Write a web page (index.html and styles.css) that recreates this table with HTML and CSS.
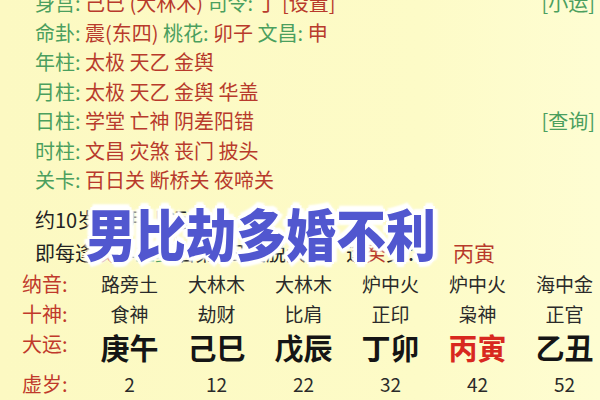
FILE: index.html
```html
<!DOCTYPE html>
<html lang="zh-CN">
<head>
<meta charset="utf-8">
<link rel="stylesheet" href="styles.css">
</head>
<body>
<div class="page">
  <div class="info">
    <div class="row"><span class="txt"><span class="g">身宫:</span> <span class="r">己巳 (大林木)</span> <span class="g">司令:</span> <span class="r">丁 [设置]</span></span><span class="link">[小运]</span></div>
    <div class="row"><span class="txt"><span class="g">命卦:</span> <span class="r">震(东四)</span> <span class="g">桃花:</span> <span class="r">卯子</span> <span class="g">文昌:</span> <span class="r">申</span></span></div>
    <div class="row"><span class="txt"><span class="g">年柱:</span> <span class="r">太极 天乙 金舆</span></span></div>
    <div class="row"><span class="txt"><span class="g">月柱:</span> <span class="r">太极 天乙 金舆 华盖</span></span></div>
    <div class="row"><span class="txt"><span class="g">日柱:</span> <span class="r">学堂 亡神 阴差阳错</span></span><span class="link">[查询]</span></div>
    <div class="row"><span class="txt"><span class="g">时柱:</span> <span class="r">文昌 灾煞 丧门 披头</span></span></div>
    <div class="row"><span class="txt"><span class="g">关卡:</span> <span class="r">百日关 断桥关 夜啼关</span></span></div>
  </div>
  <div class="note">
    <div class="nrow">约10岁1个月上运</div>
    <div class="nrow">即每逢<span class="r">戊</span>年<span class="g">立夏</span>后第5日交脱大运，逢<span class="r">癸</span>交：<span class="r now">丙寅</span></div>
  </div>
  <div class="table">
    <div class="trow small">
      <span class="lab">纳音:</span>
      <span class="cell">路旁土</span><span class="cell">大林木</span><span class="cell">大林木</span><span class="cell">炉中火</span><span class="cell">炉中火</span><span class="cell">海中金</span>
    </div>
    <div class="trow small mid">
      <span class="lab">十神:</span>
      <span class="cell">食神</span><span class="cell">劫财</span><span class="cell">比肩</span><span class="cell">正印</span><span class="cell">枭神</span><span class="cell">正官</span>
    </div>
    <div class="trow big">
      <span class="lab">大运:</span>
      <span class="cell">庚午</span><span class="cell">己巳</span><span class="cell">戊辰</span><span class="cell">丁卯</span><span class="cell cur">丙寅</span><span class="cell">乙丑</span>
    </div>
    <div class="trow age">
      <span class="lab">虚岁:</span>
      <span class="cell">2</span><span class="cell">12</span><span class="cell">22</span><span class="cell">32</span><span class="cell">42</span><span class="cell">52</span>
    </div>
  </div>
  <div class="overlay">男比劫多婚不利</div>
</div>
</body>
</html>
```

FILE: styles.css
```css
html, body {
  margin: 0;
  padding: 0;
}
body {
  width: 600px;
  height: 400px;
  overflow: hidden;
  background: #fdfbc7;
  font-family: "Noto Sans CJK SC", "Noto Sans", sans-serif;
}
.page {
  position: relative;
  width: 600px;
  height: 400px;
  overflow: hidden;
  background: linear-gradient(90deg, #fcf9c2 0%, #fdfbc7 70%, #fefdd2 100%);
}
.info {
  margin-top: -12px;
  padding-left: 35px;
  padding-right: 5px;
}
.row {
  display: flex;
  align-items: center;
  height: 29.5px;
  font-size: 20px;
  line-height: 29.5px;
}
.txt {
  white-space: pre;
}
.g { color: #4b9f5e; }
.r { color: #b83a2c; }
.link {
  margin-left: auto;
  color: #4b9f5e;
}
.note {
  margin-top: 8px;
  padding-left: 35px;
}
.nrow {
  height: 33px;
  line-height: 33px;
  font-size: 20px;
  color: #222;
  white-space: pre;
}
.now {
  margin-left: 27px;
  font-size: 21px;
}
.table {
  display: flex;
  flex-direction: column;
}
.trow {
  display: grid;
  grid-template-columns: 86px repeat(6, 87px);
  align-items: center;
  white-space: nowrap;
}
.lab {
  padding-left: 22px;
  font-size: 20px;
  color: #c0392b;
}
.cell {
  text-align: center;
  color: #2a2a2a;
}
.small {
  height: 30px;
  font-size: 19px;
}
.mid {
  height: 27px;
}
.big {
  height: 40px;
}
.big .lab {
  padding-bottom: 6px;
}
.big .cell {
  font-size: 29px;
  font-weight: 700;
  color: #151515;
}
.big .cell.cur {
  color: #d8281f;
}
.age {
  height: 36px;
}
.age .cell {
  font-size: 19px;
  color: #2a2a2a;
}
.overlay {
  position: absolute;
  left: 86px;
  top: 199px;
  font-size: 50px;
  line-height: 64px;
  font-weight: 900;
  color: #5157cf;
  white-space: nowrap;
  transform: scaleY(1.12);
  transform-origin: left center;
  text-shadow:
    3px 0 0 #fff, -3px 0 0 #fff, 0 3px 0 #fff, 0 -3px 0 #fff,
    2px 2px 0 #fff, -2px 2px 0 #fff, 2px -2px 0 #fff, -2px -2px 0 #fff,
    5px 0 2px #fff, -5px 0 2px #fff, 0 5px 2px #fff, 0 -5px 2px #fff;
}
```
